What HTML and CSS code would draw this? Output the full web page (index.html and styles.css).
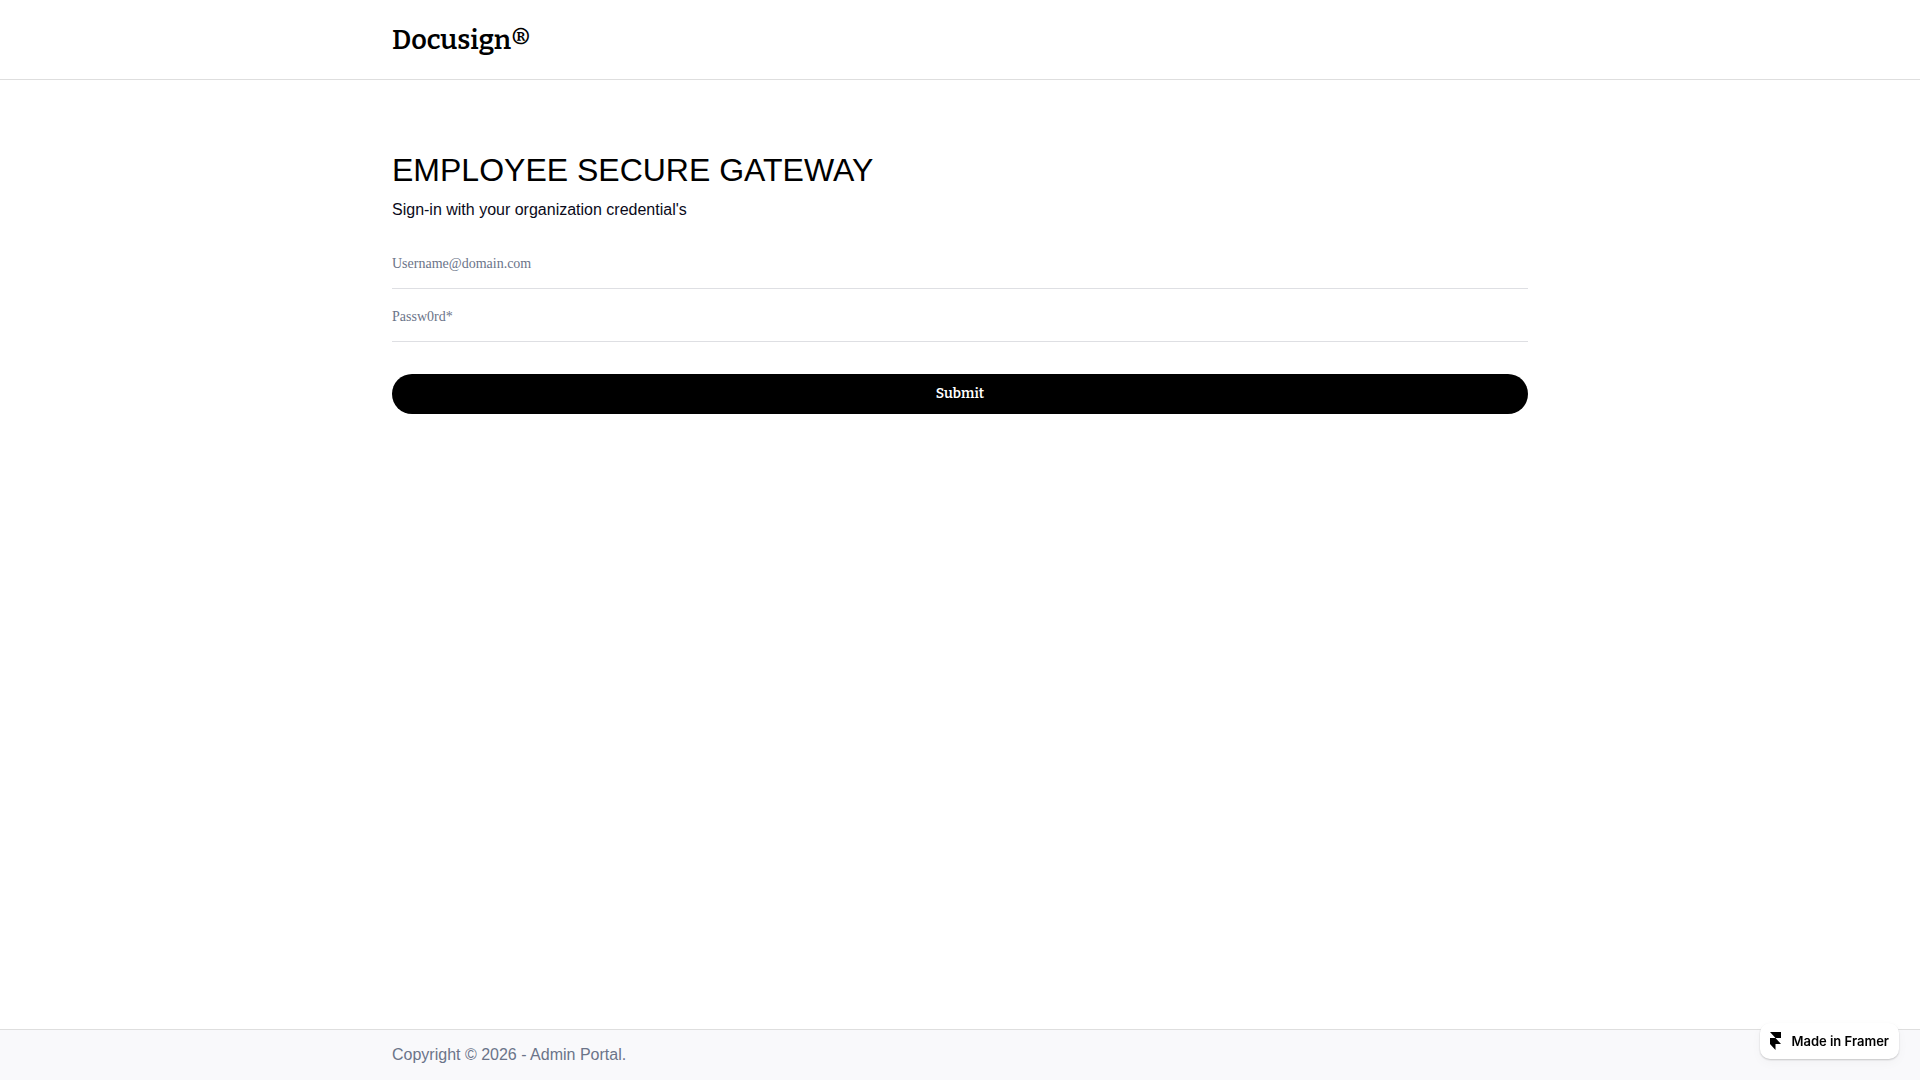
FILE: index.html
```html
<!DOCTYPE html>
<html lang="en">
<head>
    <meta charset="UTF-8">
    <meta name="viewport" content="width=device-width, initial-scale=1.0">
    <title>Employee Secure Gateway</title>
    <link rel="stylesheet" href="styles.css">
</head>
<body>
    <header class="site-header">
        <div class="container">
            <p class="logo">Docusign®</p>
        </div>
    </header>

    <main class="container">
        <h1>EMPLOYEE SECURE GATEWAY</h1>
        <p class="intro">Sign-in with your organization credential's</p>

        <form class="login-form">
            <input type="email" name="username" placeholder="Username@domain.com" aria-label="Username">
            <input type="password" name="password" placeholder="Passw0rd*" aria-label="Password">
            <button type="submit">Submit</button>
        </form>
    </main>

    <footer class="site-footer">
        <div class="container">
            <p>Copyright © 2026 - Admin Portal.</p>
        </div>
    </footer>

    <a class="badge" href="#">
        <svg width="11" height="18" viewBox="0 0 11 18" aria-hidden="true">
            <path d="M0 0h11v6H5.5zM0 6h5.5l5.5 6H5.5v6L0 12z"/>
        </svg>
        <span>Made in Framer</span>
    </a>
</body>
</html>
```

FILE: styles.css
```css
* {
    margin: 0;
    padding: 0;
    box-sizing: border-box;
}

body {
    display: flex;
    flex-direction: column;
    min-height: 100vh;
    font-family: "Liberation Sans", Arial, sans-serif;
    font-size: 16px;
    line-height: 24px;
    color: #0a0a1a;
    background-color: #fff;
}

.container {
    width: 100%;
    max-width: 1200px;
    margin: 0 auto;
    padding: 0 32px;
}

.site-header {
    padding: 20px 0 19px;
    border-bottom: 1px solid #dedede;
}

.logo {
    font-family: Bitter, "Liberation Serif", serif;
    font-size: 27px;
    font-weight: 600;
    line-height: 40px;
    color: #000;
}

main {
    flex: 1;
}

h1 {
    margin-top: 70px;
    font-size: 32px;
    font-weight: 400;
    line-height: 40px;
    color: #000;
}

.intro {
    margin-top: 8px;
}

.login-form {
    display: flex;
    flex-direction: column;
    margin-top: 14px;
}

.login-form input {
    height: 53px;
    padding-top: 4px;
    border: 0;
    border-bottom: 1px solid #dedfe3;
    background: none;
    font-family: "Liberation Serif", serif;
    font-size: 14px;
    color: #0a0a1a;
    outline: none;
}

.login-form input::placeholder {
    color: #6b7489;
}

.login-form button {
    height: 40px;
    margin-top: 32px;
    padding-bottom: 2px;
    border: 0;
    border-radius: 20px;
    background-color: #000;
    font-family: Bitter, "Liberation Serif", serif;
    font-size: 14px;
    font-weight: 600;
    color: #fff;
    cursor: pointer;
}

.site-footer {
    padding: 13px 0;
    border-top: 1px solid #dedede;
    background-color: #f9f9fb;
    color: #6b7489;
}

.badge {
    position: fixed;
    right: 21px;
    bottom: 21px;
    display: flex;
    align-items: center;
    gap: 10px;
    height: 36px;
    padding: 0 10px;
    border-radius: 10px;
    background-color: #fff;
    box-shadow: 0 1px 2px rgba(0, 0, 0, 0.2), 0 4px 12px rgba(0, 0, 0, 0.03);
    font-family: Inter, sans-serif;
    font-size: 13px;
    font-weight: 600;
    color: #000;
    text-decoration: none;
}
```
